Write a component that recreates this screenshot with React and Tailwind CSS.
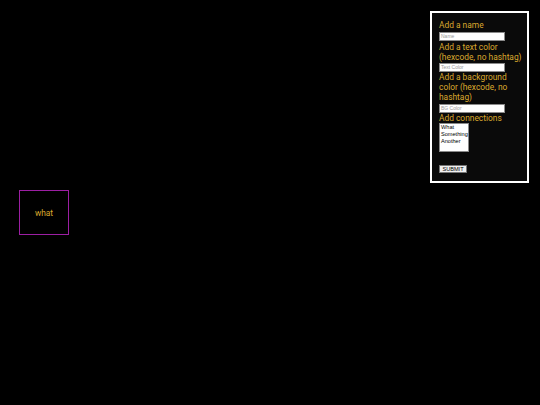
export default function App() {
  const label = "text-[8.4px] leading-[10px] text-[#dba92e] whitespace-nowrap";
  const input =
    "w-[66px] h-[9px] bg-white border border-[#8a8a8a] text-[5px] leading-[7px] text-[#9a9a9a] px-[1px] flex items-center";
  const sans = { fontFamily: "'Liberation Sans', Arial, sans-serif" };
  return (
    <div
      className="relative w-[540px] h-[405px] bg-black overflow-hidden"
      style={{ fontFamily: "Roboto, Lato, sans-serif" }}
    >
      <div className="flex justify-end pt-[11px] pr-[11px]">
        <div className="w-[99px] h-[172px] border-2 border-white bg-[#0a0a0a] pl-[7px] pr-[2px] pt-[7px] flex flex-col">
          <div className={label}>Add a name</div>
          <div className={`${input} mt-[2px] mb-[1px]`} style={sans}>Name</div>
          <div className={label}>
            Add a text color
            <br />
            (hexcode, no hashtag)
          </div>
          <div className={`${input} mt-[1px]`} style={sans}>Text Color</div>
          <div className={label}>
            Add a background
            <br />
            color (hexcode, no
            <br />
            hashtag)
          </div>
          <div className={`${input} mt-[2px]`} style={sans}>BG Color</div>
          <div className={label}>Add connections</div>
          <div
            className="w-[30px] h-[29px] bg-white border border-[#8a8a8a] text-[5.6px] leading-[7px] text-black px-[1px] overflow-hidden"
            style={sans}
          >
            <div>What</div>
            <div>Something</div>
            <div>Another</div>
          </div>
          <div
            className="mt-[13px] w-[28px] h-[8px] bg-[#efefef] border border-[#767676] text-[5.6px] leading-[6px] text-black flex items-center justify-center"
            style={sans}
          >
            SUBMIT
          </div>
        </div>
      </div>
      <div className="absolute left-[19px] top-[190px] w-[50px] h-[45px] border-[1.5px] border-[#9c1fa3] flex items-center justify-center">
        <span className="text-[8.4px] leading-[10px] text-[#dba92e]">what</span>
      </div>
    </div>
  );
}
